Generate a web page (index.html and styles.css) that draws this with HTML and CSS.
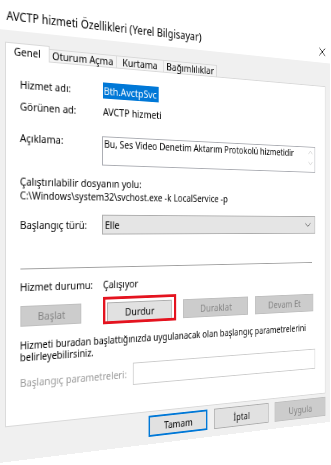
FILE: index.html
```html
<!DOCTYPE html>
<html lang="tr">
<head>
    <meta charset="UTF-8">
    <title>AVCTP hizmeti Özellikleri</title>
    <link rel="stylesheet" href="styles.css">
</head>
<body>

  <div class="stage">
    <div class="dialog">
        <div class="titlebar">
            <span class="title">AVCTP hizmeti Özellikleri (Yerel Bilgisayar)</span>
            <svg class="close" viewBox="0 0 10 10"><path d="M0.5 0.5L9.5 9.5M9.5 0.5L0.5 9.5"/></svg>
        </div>

        <div class="client">
            <div class="tabs">
                <div class="tab active">Genel</div>
                <div class="tab">Oturum Açma</div>
                <div class="tab">Kurtama</div>
                <div class="tab">Bağımlılıklar</div>
            </div>

            <div class="page">
                <div class="row">
                    <span>Hizmet adı:</span>
                    <span class="value"><span class="selected">Bth.AvctpSvc</span></span>
                </div>
                <div class="row row-display">
                    <span>Görünen ad:</span>
                    <span class="value">AVCTP hizmeti</span>
                </div>
                <div class="row row-desc">
                    <span>Açıklama:</span>
                    <div class="desc">
                        <span>Bu, Ses Video Denetim Aktarım Protokolü hizmetidir</span>
                        <div class="scroll">
                            <svg viewBox="0 0 7 4"><polyline points="0.5,3.5 3.5,0.5 6.5,3.5"/></svg>
                            <svg viewBox="0 0 7 4"><polyline points="0.5,0.5 3.5,3.5 6.5,0.5"/></svg>
                        </div>
                    </div>
                </div>

                <div class="line line-exe">Çalıştırılabilir dosyanın yolu:</div>
                <div class="line line-path">C:\Windows\system32\svchost.exe -k LocalService -p</div>

                <div class="row row-startup">
                    <span>Başlangıç türü:</span>
                    <div class="combo">
                        <span>Elle</span>
                        <svg viewBox="0 0 9 5"><polyline points="0.5,0.5 4.5,4.5 8.5,0.5"/></svg>
                    </div>
                </div>

                <div class="sep"></div>

                <div class="row row-status">
                    <span>Hizmet durumu:</span>
                    <span class="value">Çalışıyor</span>
                </div>

                <div class="svc-buttons">
                    <button class="btn btn-start" disabled>Başlat</button>
                    <span class="mark"><button class="btn btn-stop">Durdur</button></span>
                    <button class="btn btn-pause" disabled>Duraklat</button>
                    <button class="btn btn-resume" disabled>Devam Et</button>
                </div>

                <p class="hint">Hizmeti buradan başlattığınızda uygulanacak olan başlangıç parametrelerini<br>belirleyebilirsiniz.</p>

                <div class="row row-params">
                    <span class="muted">Başlangıç parametreleri:</span>
                    <div class="param-box"></div>
                </div>
            </div>

            <div class="footer">
                <button class="btn default">Tamam</button>
                <button class="btn">İptal</button>
                <button class="btn" disabled>Uygula</button>
            </div>
        </div>
    </div>
  </div>

</body>
</html>
```

FILE: styles.css
```css
* {
    box-sizing: border-box;
}

body {
    margin: 0;
    background: #fff;
    overflow: hidden;
    font-family: "Noto Sans", "Open Sans", sans-serif;
    font-size: 11px;
    line-height: 12px;
    color: #000;
}

.stage {
    width: 331px;
    height: 465px;
    overflow: hidden;
}

/* window is laid out flat, then tilted like the photo (right side further away) */
.dialog {
    width: 436px;
    height: 463px;
    background: #f0f0f0;
    transform-origin: 0 0;
    transform: matrix3d(0.919313, 0.109868, 0, 0.000484, 0, 1, 0, 0, 0, 0, 1, 0, -1.42, 0, 0, 1);
}

.titlebar {
    height: 29px;
    background: #fff;
    display: flex;
    align-items: center;
    justify-content: space-between;
    padding: 0 7px 0 8.5px;
}

.title {
    font-size: 12.2px;
    white-space: nowrap;
}

.close {
    width: 10px;
    height: 10px;
    fill: none;
    stroke: #000;
    stroke-width: 1;
    margin-top: 2px;
}

.client {
    padding: 12px 7px 0 7px;
}

/* tabs */
.tabs {
    display: grid;
    grid-template-columns: 49.6px 80.4px 59.7px 71.8px;
    align-items: end;
    height: 16px;
    position: relative;
    z-index: 1;
}

.tab {
    height: 13px;
    line-height: 11px;
    text-align: center;
    background: #f4f4f4;
    border: 1px solid #d9d9d9;
    border-bottom: 0;
    white-space: nowrap;
}

.tab.active {
    height: 17px;
    margin-bottom: -1px;
    padding-top: 2px;
    background: #fff;
}

.tab + .tab {
    border-left: 0;
}

.page {
    height: 371px;
    background: #fff;
    border: 1px solid #d9d9d9;
    padding: 16px 15.4px 0 15.5px;
}

.row {
    display: grid;
    grid-template-columns: 95px 1fr;
    align-items: center;
    height: 16px;
    white-space: nowrap;
}

.value {
    padding-left: 1.5px;
}

.selected {
    display: inline-block;
    height: 17px;
    line-height: 17px;
    padding: 0 3px 0 1px;
    background: #0078d7;
    color: #fff;
}

.row-display { margin-top: 7px; }

.row-desc {
    margin-top: 18px;
    height: 30px;
    align-items: start;
}

.desc {
    height: 31px;
    display: flex;
    justify-content: space-between;
    background: #fff;
    border: 1px solid #abadb3;
    padding: 1px 0 0 2px;
    font-size: 10.6px;
}

.scroll {
    width: 13px;
    display: flex;
    flex-direction: column;
    align-items: center;
    justify-content: space-between;
    padding: 3px 0 8px;
}

.scroll svg {
    width: 7px;
    height: 4px;
    fill: none;
    stroke: #c4c4c4;
}

.line {
    height: 12px;
    white-space: nowrap;
}

.line-exe { margin-top: 14px; }

.line-path {
    margin-top: 2px;
    font-size: 10.6px;
}

.row-startup {
    margin-top: 13px;
    height: 21px;
}

.combo {
    height: 21px;
    display: flex;
    align-items: center;
    justify-content: space-between;
    background: #e5e5e5;
    border: 1px solid #adadad;
    padding: 0 6px 0 3px;
}

.combo svg {
    width: 9px;
    height: 5px;
    fill: none;
    stroke: #555;
}

.sep {
    height: 1px;
    margin: 34px 5px 0 0;
    background: #a0a0a0;
}

.row-status {
    margin-top: 12px;
    height: 12px;
}

/* service control buttons */
.btn {
    font: inherit;
    height: 23px;
    padding: 0;
    color: #000;
    background: #e1e1e1;
    border: 1px solid #adadad;
}

.btn:disabled {
    color: #838383;
    background: #cccccc;
    border-color: #bfbfbf;
}

.btn.default {
    border: 2px solid #0078d7;
}

.svc-buttons {
    display: flex;
    height: 21px;
    margin-top: 13px;
}

.svc-buttons .btn { height: 21px; }

.btn-start { width: 70.2px; margin-left: 0.8px; }
.btn-stop { width: 82px; }
.btn-pause { width: 90.9px; margin-left: 14.6px; }
.btn-resume { width: 87.8px; margin-left: 9.7px; }

.mark {
    position: relative;
    display: flex;
    margin-left: 30.5px;
}

/* red annotation box drawn over the Stop button */
.mark::after {
    content: "";
    position: absolute;
    top: -6px;
    left: -4.5px;
    right: -5.7px;
    bottom: -1.6px;
    border: 3.5px solid #e4131f;
}

.hint {
    margin: 12.5px 0 0;
    height: 24px;
    white-space: nowrap;
    font-size: 10.5px;
}

.row-params {
    margin-top: 8px;
    height: 24px;
    grid-template-columns: 133.5px 1fr;
}

.muted {
    color: #9a9a9a;
}

.param-box {
    height: 24px;
    background: #fff;
    border: 1px solid #cccccc;
}

.footer {
    display: flex;
    justify-content: flex-end;
    gap: 9px;
    margin-top: 4px;
}

.footer .btn {
    width: 78px;
}
```
